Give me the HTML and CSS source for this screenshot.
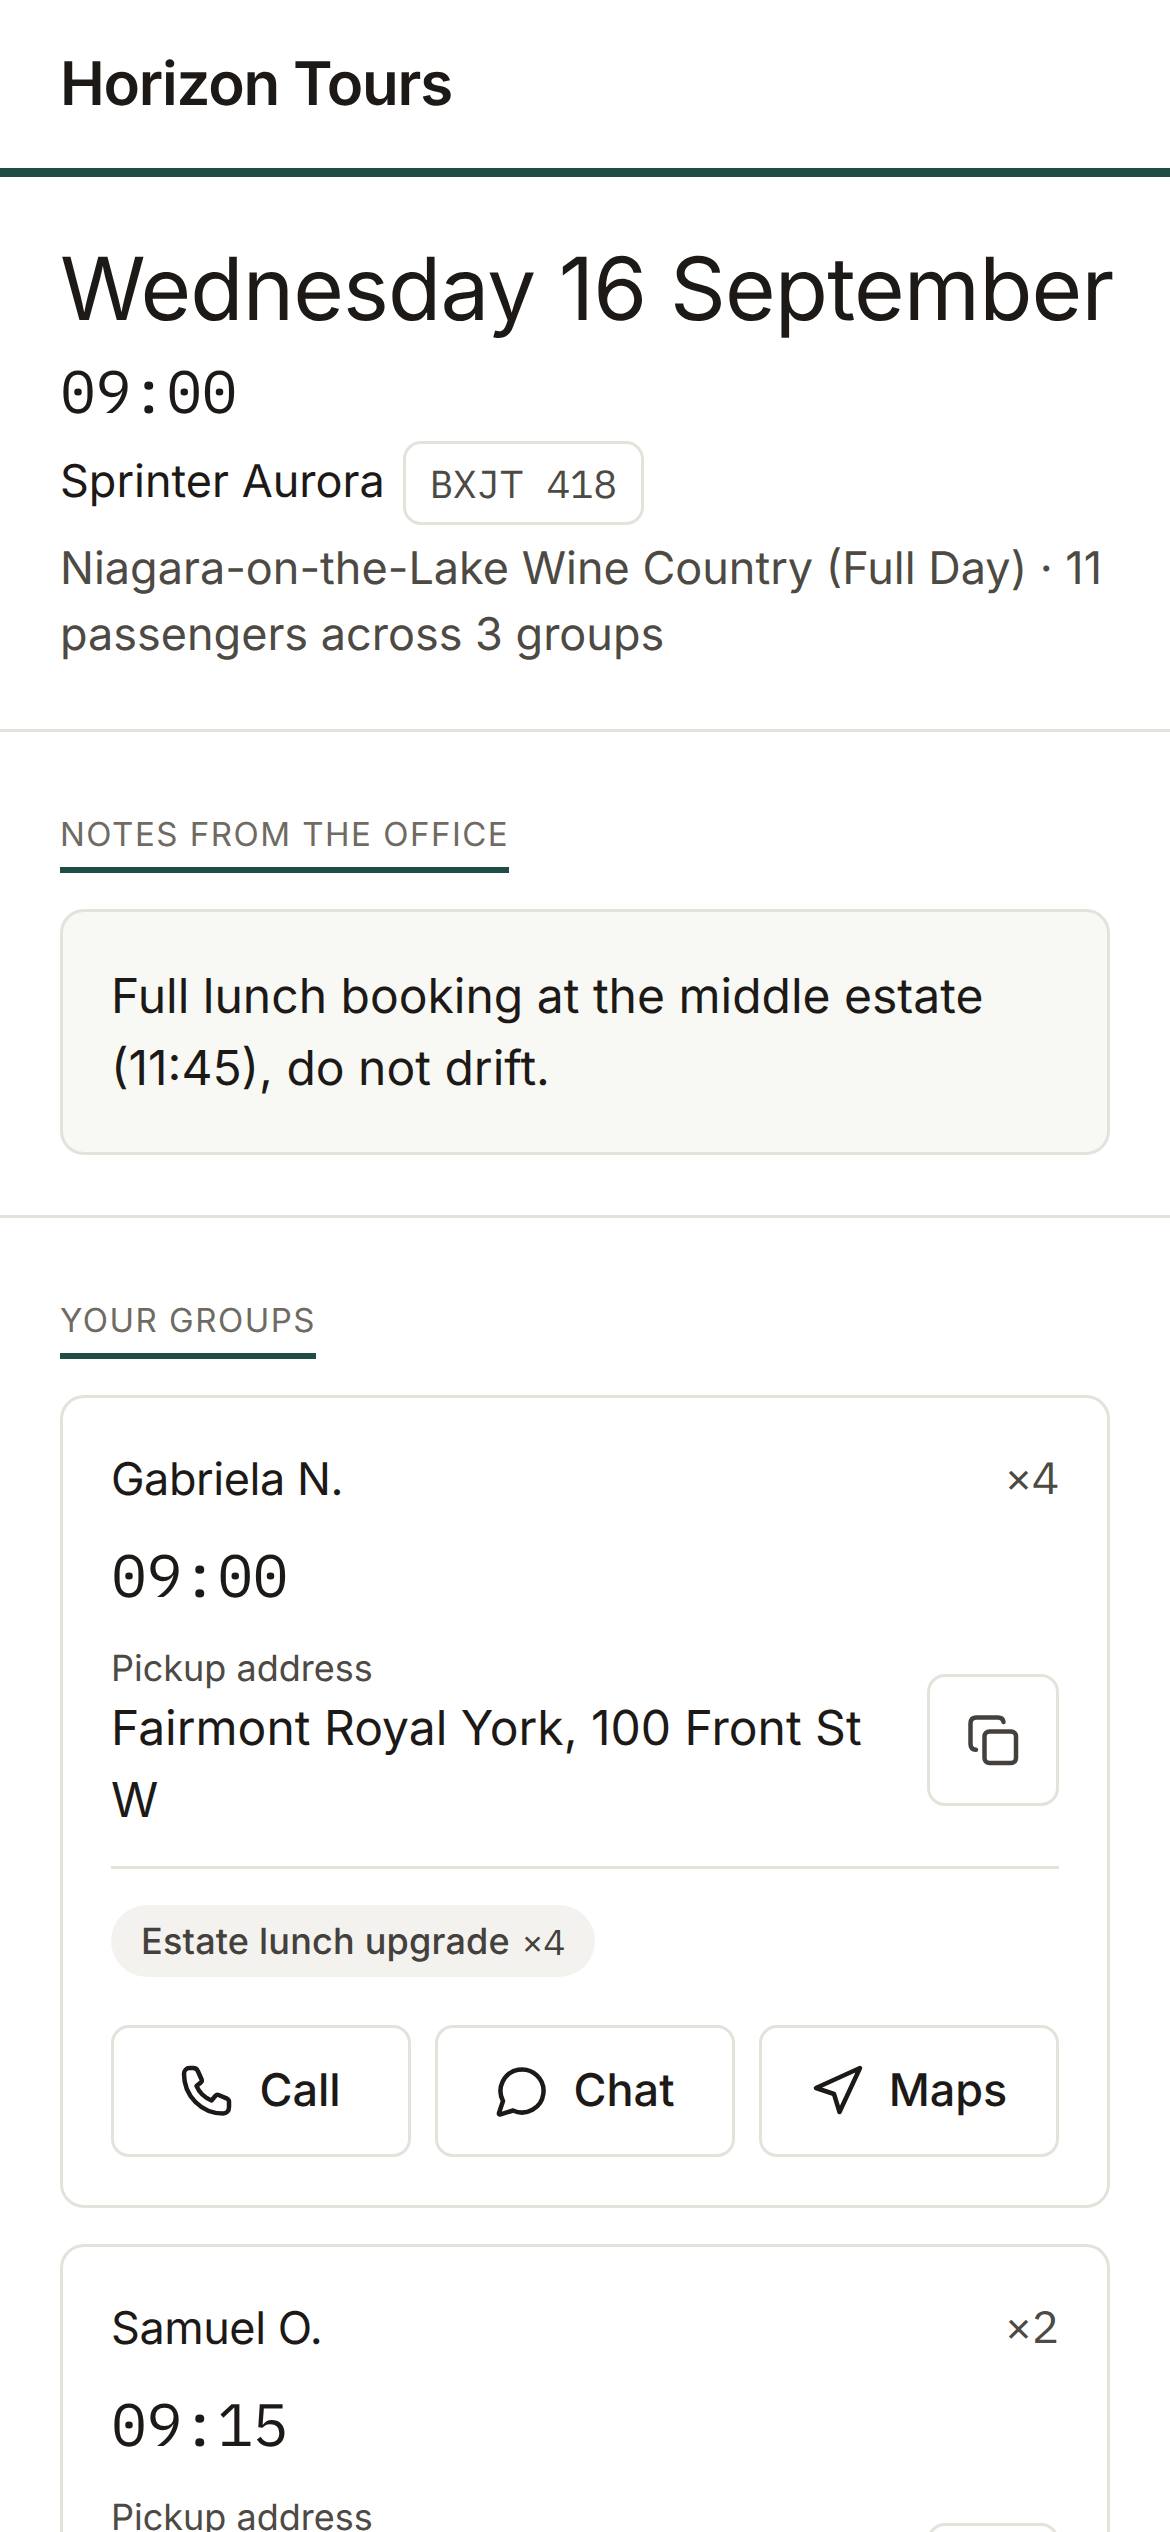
FILE: index.html
```html
<!DOCTYPE html>
<html lang="en">
<head>
  <meta charset="UTF-8" />
  <meta name="viewport" content="width=device-width, initial-scale=1.0"/>
  <title>Horizon Tours</title>
  <link rel="stylesheet" href="styles.css">
</head>
<body>
  <header class="topbar">
    <div class="brand">Horizon Tours</div>
  </header>

  <section class="section trip">
    <h1 class="trip-date">Wednesday 16 September</h1>
    <div class="trip-time">09:00</div>
    <div class="vehicle">
      <span class="vehicle-name">Sprinter Aurora</span>
      <span class="plate">BXJT 418</span>
    </div>
    <p class="trip-info">Niagara-on-the-Lake Wine Country (Full Day) · 11 passengers across 3 groups</p>
  </section>

  <section class="section">
    <h2 class="label">Notes from the office</h2>
    <div class="note">Full lunch booking at the middle estate (11:45), do not drift.</div>
  </section>

  <section class="section groups">
    <h2 class="label">Your groups</h2>

    <div class="group">
      <div class="group-head">
        <span class="group-name">Gabriela N.</span>
        <span class="pax">×4</span>
      </div>
      <div class="group-time">09:00</div>
      <div class="pickup">
        <div class="pickup-text">
          <div class="pickup-label">Pickup address</div>
          <div class="pickup-address">Fairmont Royal York, 100 Front St W</div>
        </div>
        <button class="copy-btn" aria-label="Copy address">
          <svg class="icon" viewBox="0 0 60 60"><rect x="21.5" y="21.5" width="31.5" height="31.5" rx="5"/><path d="M40.5 12Q39.8 7.5 35 7.5H13.5Q7.5 7.5 7.5 13.5V34Q7.5 39.5 13 39.8"/></svg>
        </button>
      </div>
      <div class="extras">
        <span class="pill">Estate lunch upgrade <span class="pill-count">×4</span></span>
      </div>
      <div class="actions">
        <a class="action" href="#">
          <svg class="icon" viewBox="4 1 54 54"><path d="M7 13C7 9.5 9.5 7 12.5 7H16C18.5 7 20 8 20.8 10L24.6 18.5C25 19.6 24.8 20.6 23.8 21.4L19.5 25C22 31 27.5 36.5 34.5 39.5L38.5 34.8C39.3 33.8 40.3 33.5 41.5 34L49.5 37.3C51.5 38.2 52.3 39.5 52 41.5V46C52 50 49.5 52.5 46 52.5C24.5 52.5 7 35 7 13Z"/></svg>
          Call
        </a>
        <a class="action" href="#">
          <svg class="icon" viewBox="4 1 54 54"><path d="M11 40A21.5 21.5 0 1 1 21 49.5L8.6 53.3Q6.5 54 7 52Z"/></svg>
          Chat
        </a>
        <a class="action" href="#">
          <svg class="icon" viewBox="4 1 54 54"><path d="M53 7L9 27L27 33L32.5 51Z"/></svg>
          Maps
        </a>
      </div>
    </div>

    <div class="group">
      <div class="group-head">
        <span class="group-name">Samuel O.</span>
        <span class="pax">×2</span>
      </div>
      <div class="group-time">09:15</div>
      <div class="pickup">
        <div class="pickup-text">
          <div class="pickup-label">Pickup address</div>
          <div class="pickup-address"></div>
        </div>
        <button class="copy-btn" aria-label="Copy address">
          <svg class="icon" viewBox="0 0 60 60"><rect x="21.5" y="21.5" width="31.5" height="31.5" rx="5"/><path d="M40.5 12Q39.8 7.5 35 7.5H13.5Q7.5 7.5 7.5 13.5V34Q7.5 39.5 13 39.8"/></svg>
        </button>
      </div>
    </div>
  </section>
</body>
</html>
```

FILE: styles.css
```css
html, body {
  height: 2532px;
  overflow: hidden;
}

body {
  margin: 0;
  background: #fff;
  color: #1c1917;
  font-family: Inter, "Liberation Sans", sans-serif;
  font-size: 48px;
  text-rendering: geometricPrecision;
}

.topbar {
  height: 168px;
  padding: 0 60px;
  display: flex;
  align-items: center;
  border-bottom: 9px solid #1f4d45;
}

.brand {
  font-size: 60px;
  font-weight: 600;
  letter-spacing: -1.2px;
}

.section {
  padding: 78px 60px 60px;
  border-bottom: 3px solid #e5e2db;
}

.trip {
  padding-top: 60px;
  padding-bottom: 62px;
}

.trip-date {
  margin: 0;
  font-size: 87px;
  font-weight: 400;
  line-height: 104px;
  letter-spacing: -0.87px;
  white-space: nowrap;
}

.trip-time,
.group-time {
  font-family: "IBM Plex Mono", "Liberation Mono", monospace;
  font-size: 60px;
  line-height: 82px;
  letter-spacing: -0.6px;
}

.trip-time {
  margin-top: 9px;
}

.vehicle {
  display: flex;
  align-items: center;
  gap: 18px;
  margin-top: 9px;
  font-size: 45px;
}

.vehicle-name {
  padding-bottom: 5px;
}

.plate {
  padding: 0 24px;
  height: 78px;
  display: flex;
  align-items: center;
  border: 3px solid #e5e2db;
  border-radius: 18px;
  color: #4d4943;
  font-family: "IBM Plex Mono", "Liberation Mono", monospace;
  font-size: 39px;
}

.trip-info {
  margin: 10px 0 0;
  color: #4d4943;
  font-size: 45px;
  line-height: 66px;
}

.label {
  display: table;
  margin: 0 0 36px;
  padding-bottom: 9px;
  border-bottom: 6px solid #1f4d45;
  color: #6f6b63;
  font-size: 33px;
  font-weight: 400;
  letter-spacing: 1.5px;
  line-height: 48px;
  text-transform: uppercase;
}

.note {
  padding: 48px;
  background: #f8f8f4;
  border: 3px solid #e5e2db;
  border-radius: 24px;
  line-height: 72px;
}

.groups {
  border-bottom: 0;
}

.group {
  margin-bottom: 36px;
  padding: 48px;
  border: 3px solid #e5e2db;
  border-radius: 24px;
}

.group-head {
  display: flex;
  justify-content: space-between;
  align-items: center;
  font-size: 45px;
  line-height: 65px;
}

.group-name {
  letter-spacing: -0.45px;
}

.pax {
  color: #4d4943;
  font-family: "IBM Plex Mono", "Liberation Mono", monospace;
}

.group-time {
  margin-top: 23px;
}

.pickup {
  display: flex;
  align-items: center;
  gap: 36px;
  margin-top: 28px;
  padding-bottom: 30px;
}

.pickup-text {
  flex: 1;
}

.pickup-label {
  color: #4d4943;
  font-size: 36px;
  line-height: 48px;
}

.pickup-address {
  min-height: 144px;
  line-height: 72px;
}

.copy-btn {
  flex: none;
  width: 132px;
  height: 132px;
  padding: 0;
  display: flex;
  align-items: center;
  justify-content: center;
  background: #fff;
  border: 3px solid #e5e2db;
  border-radius: 18px;
  color: #44403c;
}

.icon {
  flex: none;
  width: 60px;
  height: 60px;
  fill: none;
  stroke: currentColor;
  stroke-width: 4.5;
  stroke-linecap: round;
  stroke-linejoin: round;
}

.extras {
  padding-top: 36px;
  border-top: 3px solid #e5e2db;
  display: flex;
}

.pill {
  padding: 0 30px;
  height: 72px;
  display: flex;
  align-items: center;
  gap: 12px;
  background: #f3f2ef;
  border-radius: 36px;
  color: #44403c;
  font-size: 36px;
  font-weight: 500;
  letter-spacing: 0.2px;
}

.pill-count {
  font-family: "IBM Plex Mono", "Liberation Mono", monospace;
  font-weight: 400;
  letter-spacing: 0;
}

.actions {
  display: grid;
  grid-template-columns: repeat(3, 1fr);
  gap: 24px;
  margin-top: 48px;
}

.action {
  height: 132px;
  box-sizing: border-box;
  padding-bottom: 4px;
  display: flex;
  align-items: center;
  justify-content: center;
  gap: 24px;
  border: 3px solid #e5e2db;
  border-radius: 18px;
  color: #1c1917;
  font-size: 45px;
  font-weight: 500;
  text-decoration: none;
}

.action .icon {
  width: 54px;
  height: 54px;
  overflow: visible;
}
```
